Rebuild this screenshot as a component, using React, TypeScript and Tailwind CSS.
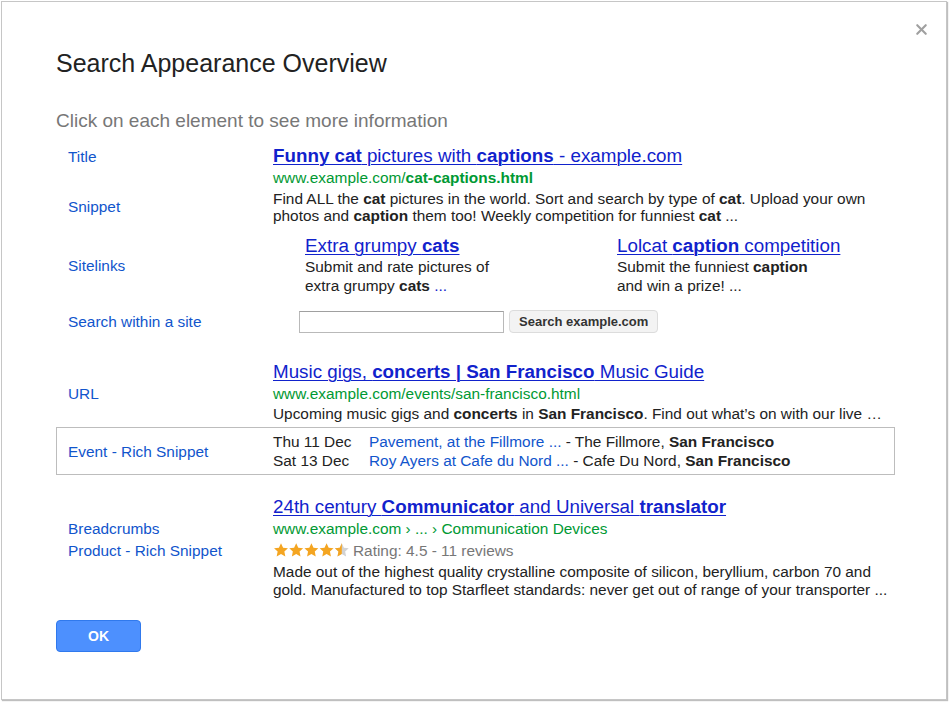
import { X } from "lucide-react";

const TITLE = "block w-fit text-[18.8px] leading-[22px] text-[#1122cc] underline decoration-1 underline-offset-2";
const URL = "text-[15.4px] leading-[21px] text-[#009933]";
const BODY = "text-[15.4px] text-[#222]";
const LABEL = "text-[15.4px] leading-[19px] text-[#1155cc]";

function Row({ label, children, className = "" }: { label?: string; children: React.ReactNode; className?: string }) {
  return (
    <div className={`grid grid-cols-[217px_1fr] leading-[17px] ${className}`}>
      <div className={`pl-3 flex items-center ${LABEL}`}>{label}</div>
      <div>{children}</div>
    </div>
  );
}

function Stars() {
  const star = "M10 1.5l2.6 5.6 6.1.7-4.5 4.2 1.2 6L10 15l-5.4 3 1.2-6L1.3 7.8l6.1-.7z";
  return (
    <svg width="76" height="16" viewBox="0 0 95 20" className="mr-1">
      <defs>
        <clipPath id="half-star">
          <rect x="76" y="0" width="10" height="20" />
        </clipPath>
      </defs>
      {[0, 1, 2, 3].map((i) => (
        <path key={i} d={star} transform={`translate(${i * 19} 0)`} fill="#f4a521" />
      ))}
      <path d={star} transform="translate(76 0)" fill="#d2d2d2" />
      <g clipPath="url(#half-star)">
        <path d={star} transform="translate(76 0)" fill="#f4a521" />
      </g>
    </svg>
  );
}

export default function App() {
  return (
    <div className="w-[950px] h-[704px] bg-white overflow-hidden font-['Liberation_Sans',Arial,sans-serif] pt-px pl-px">
      <div className="relative w-[946px] h-[699px] border border-[#c6c6c6] shadow-[1px_1px_1px_rgba(0,0,0,0.25)] bg-white pl-[54px] pr-[51px]">
        <button className="absolute right-[16px] top-[19px] text-[#a0a0a0]">
          <X size={17} strokeWidth={3} />
        </button>

        <h1 className="mt-[46px] text-[25px] leading-[30px] text-[#222]">Search Appearance Overview</h1>
        <p className="mt-[31px] text-[19px] leading-[24px] text-[#777]">Click on each element to see more information</p>

        <div className="mt-[12px]">
          {/* Funny cat result */}
          <Row label="Title">
            <a className={TITLE}>
              <b>Funny cat</b> pictures with <b>captions</b> - example.com
            </a>
          </Row>
          <Row>
            <div className={URL}>
              www.example.com/<b>cat-captions.html</b>
            </div>
          </Row>
          <Row label="Snippet">
            <div className={`${BODY} leading-[17px] pt-[2px]`}>
              Find ALL the <b>cat</b> pictures in the world. Sort and search by type of <b>cat</b>. Upload your own
              <br />
              photos and <b>caption</b> them too! Weekly competition for funniest <b>cat</b> ...
            </div>
          </Row>

          {/* Sitelinks */}
          <Row label="Sitelinks" className="mt-[11px]">
            <div className="grid grid-cols-[312px_1fr] pl-8">
              <div>
                <a className={`${TITLE} leading-[21px]`}>
                  Extra grumpy <b>cats</b>
                </a>
                <div className={`${BODY} leading-[19px]`}>
                  Submit and rate pictures of
                  <br />
                  extra grumpy <b>cats</b> <span className="text-[#1122cc]">...</span>
                </div>
              </div>
              <div>
                <a className={`${TITLE} leading-[21px]`}>
                  Lolcat <b>caption</b> competition
                </a>
                <div className={`${BODY} leading-[19px]`}>
                  Submit the funniest <b>caption</b>
                  <br />
                  and win a prize! ...
                </div>
              </div>
            </div>
          </Row>

          <Row label="Search within a site" className="mt-[15px]">
            <div className="flex items-center gap-[5px] pl-[26px]">
              <input className="w-[205px] h-[22px] border border-[#b9b9b9] border-t-[#a0a0a0] bg-white" />
              <button className="h-[23px] px-[9px] rounded-sm border border-[#dcdcdc] bg-[#f3f3f3] text-[13px] leading-[21px] font-bold text-[#333]">
                Search example.com
              </button>
            </div>
          </Row>

          {/* Music gigs result */}
          <Row className="mt-[28px]">
            <a className={TITLE}>
              Music gigs, <b>concerts | San Francisco</b> Music Guide
            </a>
          </Row>
          <Row label="URL">
            <div className={URL}>www.example.com/events/san-francisco.html</div>
          </Row>
          <Row>
            <div className={`${BODY} leading-[20px]`}>
              Upcoming music gigs and <b>concerts</b> in <b>San Francisco</b>. Find out what’s on with our live …
            </div>
          </Row>

          <div className="mt-[3px] grid grid-cols-[216px_1fr] border border-[#bdbdbd] py-[4px]">
            <div className={`pl-[11px] flex items-center ${LABEL}`}>Event - Rich Snippet</div>
            <div className={`${BODY} leading-[19px] grid grid-cols-[96px_1fr]`}>
              <span>Thu 11 Dec</span>
              <span>
                <a className="text-[#1155cc]">Pavement, at the Fillmore ...</a> - The Fillmore, <b>San Francisco</b>
              </span>
              <span>Sat 13 Dec</span>
              <span>
                <a className="text-[#1155cc]">Roy Ayers at Cafe du Nord ...</a> - Cafe Du Nord, <b>San Francisco</b>
              </span>
            </div>
          </div>

          {/* Communicator result */}
          <Row className="mt-[21px]">
            <a className={TITLE}>
              24th century <b>Communicator</b> and Universal <b>translator</b>
            </a>
          </Row>
          <Row label="Breadcrumbs">
            <div className={URL}>www.example.com › ... › Communication Devices</div>
          </Row>
          <Row label="Product - Rich Snippet">
            <div className="flex items-center h-[22px] text-[15.4px] text-[#777]">
              <Stars />
              Rating: 4.5 - 11 reviews
            </div>
          </Row>
          <Row>
            <div className={`${BODY} leading-[18px] pt-[2px]`}>
              Made out of the highest quality crystalline composite of silicon, beryllium, carbon 70 and
              <br />
              gold. Manufactured to top Starfleet standards: never get out of range of your transporter ...
            </div>
          </Row>
        </div>

        <button className="mt-[21px] w-[85px] h-[32px] rounded-sm border border-[#3079ed] bg-[#4d90fe] text-white text-[14px] font-bold">
          OK
        </button>
      </div>
    </div>
  );
}
